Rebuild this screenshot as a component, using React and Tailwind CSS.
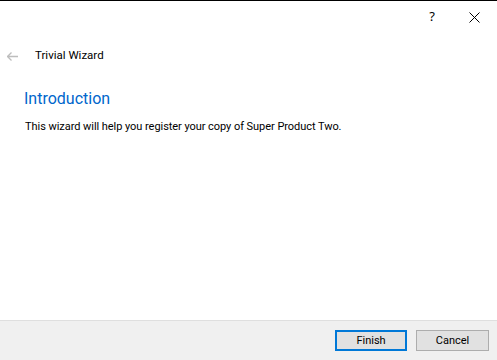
export default function App() {
  return (
    <div className="w-[497px] h-[360px] bg-white flex flex-col overflow-hidden text-black font-['Roboto','Noto_Sans',sans-serif]">
      <div className="h-px bg-black" />
      <div className="h-[31px] flex items-center justify-end pr-[17px] gap-[34px]">
        <span className="text-[13px] leading-none font-['Noto_Sans',sans-serif]">?</span>
        <svg width="11" height="11" viewBox="0 0 11 11" className="mt-px">
          <path d="M0.5 0.5 L10.5 10.5 M10.5 0.5 L0.5 10.5" stroke="#000" strokeWidth="1" />
        </svg>
      </div>
      <div className="h-[46px] flex items-center pl-[7px] pt-[2px]">
        <svg width="11" height="9" viewBox="0 0 11 9" className="mr-[17px]">
          <path d="M0.5 4.5 H11 M4.5 0.5 L0.5 4.5 L4.5 8.5" stroke="#bdbdbd" strokeWidth="1.3" fill="none" />
        </svg>
        <span className="text-[11.5px]">Trivial Wizard</span>
      </div>
      <div className="flex-1 flex flex-col pl-[24px] pt-[11px]">
        <div className="text-[16px] leading-[20px] text-[#0066cc]">Introduction</div>
        <div className="text-[11px] leading-[16px] mt-[10px] pl-px tracking-[-0.05px]">This wizard will help you register your copy of Super Product Two.</div>
      </div>
      <div className="h-[40px] bg-[#f0f0f0] border-t border-[#dfdfdf] flex items-start justify-end pt-[9px] pr-[8px] gap-[9px]">
        <button className="w-[72px] h-[21px] bg-[#e1e1e1] border-2 border-[#0078d7] text-[11px] leading-none flex items-center justify-center">Finish</button>
        <button className="w-[73px] h-[21px] bg-[#e1e1e1] border border-[#adadad] text-[11px] leading-none flex items-center justify-center">Cancel</button>
      </div>
    </div>
  );
}
